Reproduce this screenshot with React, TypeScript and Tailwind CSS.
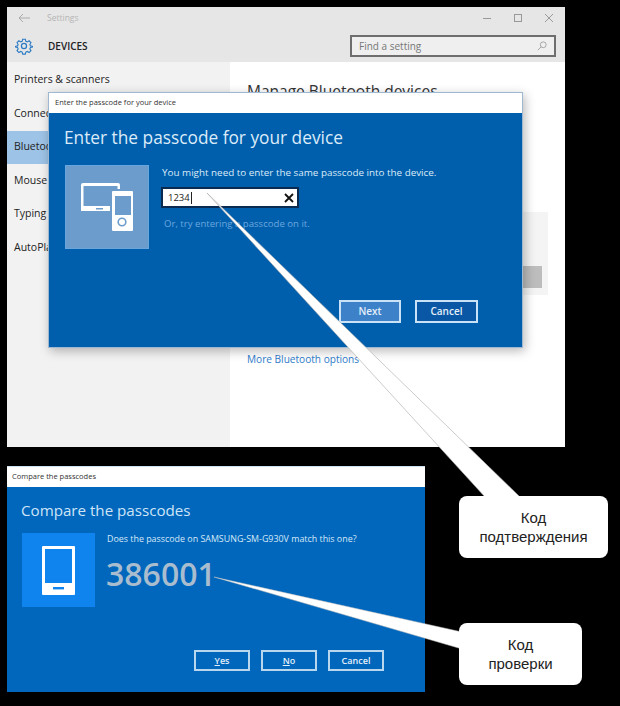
import React from "react";

const font = { fontFamily: '"Open Sans", "Noto Sans", sans-serif' };

function SideItem({ label, active }: { label: string; active?: boolean }) {
  return (
    <div className={`flex h-[33.5px] items-center pl-[7px] text-[10.5px] text-[#222] ${active ? "bg-[#9dc3e6]" : ""}`}>
      {label}
    </div>
  );
}

function DialogButton({ label, active, w }: { label: React.ReactNode; active?: boolean; w: string }) {
  return (
    <div className={`flex h-[23px] items-center justify-center border-2 border-[#c9e2f7] text-[10px] font-semibold text-[#e4eef8] ${active ? "bg-[#3d82c9]" : "bg-[#0a57a6]"} ${w}`}>
      {label}
    </div>
  );
}

function CompareButton({ label }: { label: React.ReactNode }) {
  return (
    <div className="flex h-[21px] w-[56px] items-center justify-center border-2 border-[#b9d6ef] bg-[#0067bd] text-[9px] font-semibold text-[#e4eef8]">
      {label}
    </div>
  );
}

export default function App() {
  return (
    <div style={font} className="relative h-[706px] w-[620px] overflow-hidden bg-black">
      {/* Settings window */}
      <div className="absolute left-[7px] top-[7px] flex h-[440px] w-[558px] flex-col bg-white">
        <div className="h-[55px] shrink-0 bg-[#e6e6e6] pl-[8px]">
          <div className="flex h-[22px] items-center text-[#b5b5b5]">
            <svg width="12" height="10" viewBox="0 0 12 10" className="ml-[3px]" fill="none" stroke="#aaa" strokeWidth="1">
              <path d="M12 5H1M5 1 1 5l4 4" />
            </svg>
            <span className="ml-[17px] text-[8.5px]">Settings</span>
            <div className="ml-auto mr-[12px] flex items-center gap-[23px]">
              <div className="h-px w-[8px] bg-[#999]" />
              <div className="h-[8px] w-[8px] border border-[#999]" />
              <svg width="8" height="8" viewBox="0 0 8 8" stroke="#999" strokeWidth="1"><path d="M0 0l8 8M8 0 0 8" /></svg>
            </div>
          </div>
          <div className="flex items-center pt-[6px]">
            <svg width="18" height="18" viewBox="0 0 24 24" fill="none" stroke="#2e7cc4" strokeWidth="1.7">
              <circle cx="12" cy="12" r="3.4" />
              <path d="M10 2h4l.7 3 2.2.9 2.6-1.6 2.8 2.8-1.6 2.6.9 2.2 3 .7v.8l-3 .7-.9 2.2 1.6 2.6-2.8 2.8-2.6-1.6-2.2.9-.7 3h-4l-.7-3-2.2-.9-2.6 1.6-2.8-2.8 1.6-2.6-.9-2.2-3-.7v-.8l3-.7.9-2.2-1.6-2.6 2.8-2.8 2.6 1.6 2.2-.9z" transform="translate(1.2 1.2) scale(.9)" />
            </svg>
            <span className="ml-[15px] text-[10px] font-semibold text-[#222]">DEVICES</span>
            <div className="ml-auto mr-[9px] flex h-[22px] w-[206px] items-center justify-between border-2 border-[#6e6e6e] bg-[#efefef] px-[7px] text-[10px] text-[#777]">
              <span>Find a setting</span>
              <svg width="10" height="10" viewBox="0 0 12 12" fill="none" stroke="#999" strokeWidth="1">
                <circle cx="7.5" cy="4.5" r="3.5" /><path d="M5 7 1 11" />
              </svg>
            </div>
          </div>
        </div>
        <div className="flex flex-1">
          <div className="w-[223px] bg-[#f2f2f2] pt-[1.5px]">
            <SideItem label="Printers & scanners" />
            <SideItem label="Connected devices" />
            <SideItem label="Bluetooth" active />
            <SideItem label="Mouse & touchpad" />
            <SideItem label="Typing" />
            <SideItem label="AutoPlay" />
          </div>
          <div className="flex-1 pl-[17px] pt-[18px]">
            <div className="text-[15.5px] leading-[22px] text-[#333]">Manage Bluetooth devices</div>
            <div className="ml-[-17px] mt-[110px] flex h-[83px] w-[318px] items-end justify-end bg-[#f4f4f4] pb-[7px] pr-[6px]">
              <div className="h-[22px] w-[200px] bg-[#bdbdbd]" />
            </div>
            <div className="mt-[56px] text-[10.1px] leading-[16px] text-[#2e7ccb]">More Bluetooth options</div>
          </div>
        </div>
      </div>

      {/* Passcode dialog */}
      <div className="absolute left-[48px] top-[92px] flex h-[256px] w-[475px] flex-col border border-[#9db8d0] shadow-[2px_3px_10px_rgba(0,0,0,0.28)]">
        <div className="flex h-[20px] shrink-0 items-center bg-white pl-[6px] text-[7.5px] text-[#333]">
          Enter the passcode for your device
        </div>
        <div className="flex-1 bg-[#005fad] pl-[15px] pr-[44px] pt-[12px]">
          <div className="text-[17.3px] leading-[26px] text-[#dcebf8]">Enter the passcode for your device</div>
          <div className="ml-[1px] mt-[14px] flex items-start">
            <div className="flex h-[84px] w-[84px] items-center justify-center border border-[#69a6de] bg-[#6b9ccb]">
              <svg width="52" height="48" viewBox="0 0 52 48">
                <path d="M2 0h35a2 2 0 0 1 2 2v26H0V2a2 2 0 0 1 2-2z" fill="#fff" />
                <rect x="2.5" y="3" width="34" height="20" fill="#6b9ccb" />
                <rect x="15" y="25" width="7" height="1.5" fill="#6b9ccb" />
                <rect x="29" y="6" width="23" height="42" fill="#6b9ccb" />
                <rect x="31" y="8" width="21" height="40" rx="1" fill="#fff" />
                <rect x="34" y="13" width="16" height="19" fill="#6b9ccb" />
                <circle cx="41" cy="39" r="3.8" fill="none" stroke="#6b9ccb" strokeWidth="1.6" />
              </svg>
            </div>
            <div className="ml-[13px] flex-1">
              <div className="text-[9.85px] leading-[14px] text-[#dcebf8]">You might need to enter the same passcode into the device.</div>
              <div className="ml-[-1px] mt-[8px] flex h-[21px] w-[138px] items-center justify-between border-2 border-[#0b2a50] bg-white pl-[5px] pr-[3px] text-[9.5px] text-[#222]">
                <span className="border-r border-[#222] pr-px leading-[12px]">1234</span>
                <svg width="10" height="10" viewBox="0 0 10 10" stroke="#111" strokeWidth="1.8"><path d="M1 1l8 8M9 1 1 9" /></svg>
              </div>
              <div className="ml-[2px] mt-[9px] text-[9.6px] leading-[14px] text-[#6ba6de]">Or, try entering a passcode on it.</div>
            </div>
          </div>
          <div className="mt-[51px] flex justify-end gap-[14px]">
            <DialogButton label="Next" active w="w-[62px]" />
            <DialogButton label="Cancel" w="w-[63px]" />
          </div>
        </div>
      </div>

      {/* Compare window */}
      <div className="absolute left-[7px] top-[466px] flex h-[226px] w-[418px] flex-col border-t border-[#cfe0ee]">
        <div className="flex h-[20px] shrink-0 items-center bg-white pl-[5px] text-[7.5px] text-[#333]">Compare the passcodes</div>
        <div className="flex-1 bg-[#0067bd] pl-[15px] pr-[41px] pt-[11px]">
          <div className="ml-[-1px] text-[15.15px] leading-[24px] text-[#cfe4f6]">Compare the passcodes</div>
          <div className="mt-[11px] flex items-start">
            <div className="flex h-[74px] w-[73px] items-center justify-center bg-[#0f84ee]">
              <svg width="33" height="49" viewBox="0 0 33 49">
                <rect width="33" height="49" rx="1" fill="#fff" />
                <rect x="3" y="3" width="27" height="34" fill="#0f84ee" />
                <rect x="11" y="41" width="11" height="2.4" fill="#0f84ee" />
              </svg>
            </div>
            <div className="ml-[12px]">
              <div className="text-[8.9px] leading-[12px] text-[#d7e8f6]">Does the passcode on SAMSUNG-SM-G930V match this one?</div>
              <div className="ml-[-1px] mt-[7px] text-[32px] font-semibold leading-[44px] text-[#a9bdcf]">386001</div>
            </div>
          </div>
          <div className="mt-[43px] flex justify-end gap-[11px]">
            <CompareButton label={<span><u>Y</u>es</span>} />
            <CompareButton label={<span><u>N</u>o</span>} />
            <CompareButton label="Cancel" />
          </div>
        </div>
      </div>

      {/* Callout pointers */}
      <svg className="absolute left-0 top-0" width="620" height="706" viewBox="0 0 620 706">
        <polygon points="207,193 520,497 485,497" fill="#fff" stroke="#a8a8a8" strokeWidth="0.6" />
        <polygon points="214,577 462,632 462,649" fill="#fff" stroke="#bbb" strokeWidth="0.5" />
      </svg>

      {/* Callouts */}
      <div className="absolute left-[459px] top-[496px] flex h-[62px] w-[149px] flex-col items-center justify-center rounded-[8px] bg-white text-[15px] leading-[19px] text-[#222]" style={{ fontFamily: '"Liberation Sans", sans-serif' }}>
        <div>Код</div>
        <div>подтверждения</div>
      </div>
      <div className="absolute left-[459px] top-[623px] flex h-[62px] w-[123px] flex-col items-center justify-center rounded-[8px] bg-white text-[15px] leading-[19px] text-[#222]" style={{ fontFamily: '"Liberation Sans", sans-serif' }}>
        <div>Код</div>
        <div>проверки</div>
      </div>
    </div>
  );
}
